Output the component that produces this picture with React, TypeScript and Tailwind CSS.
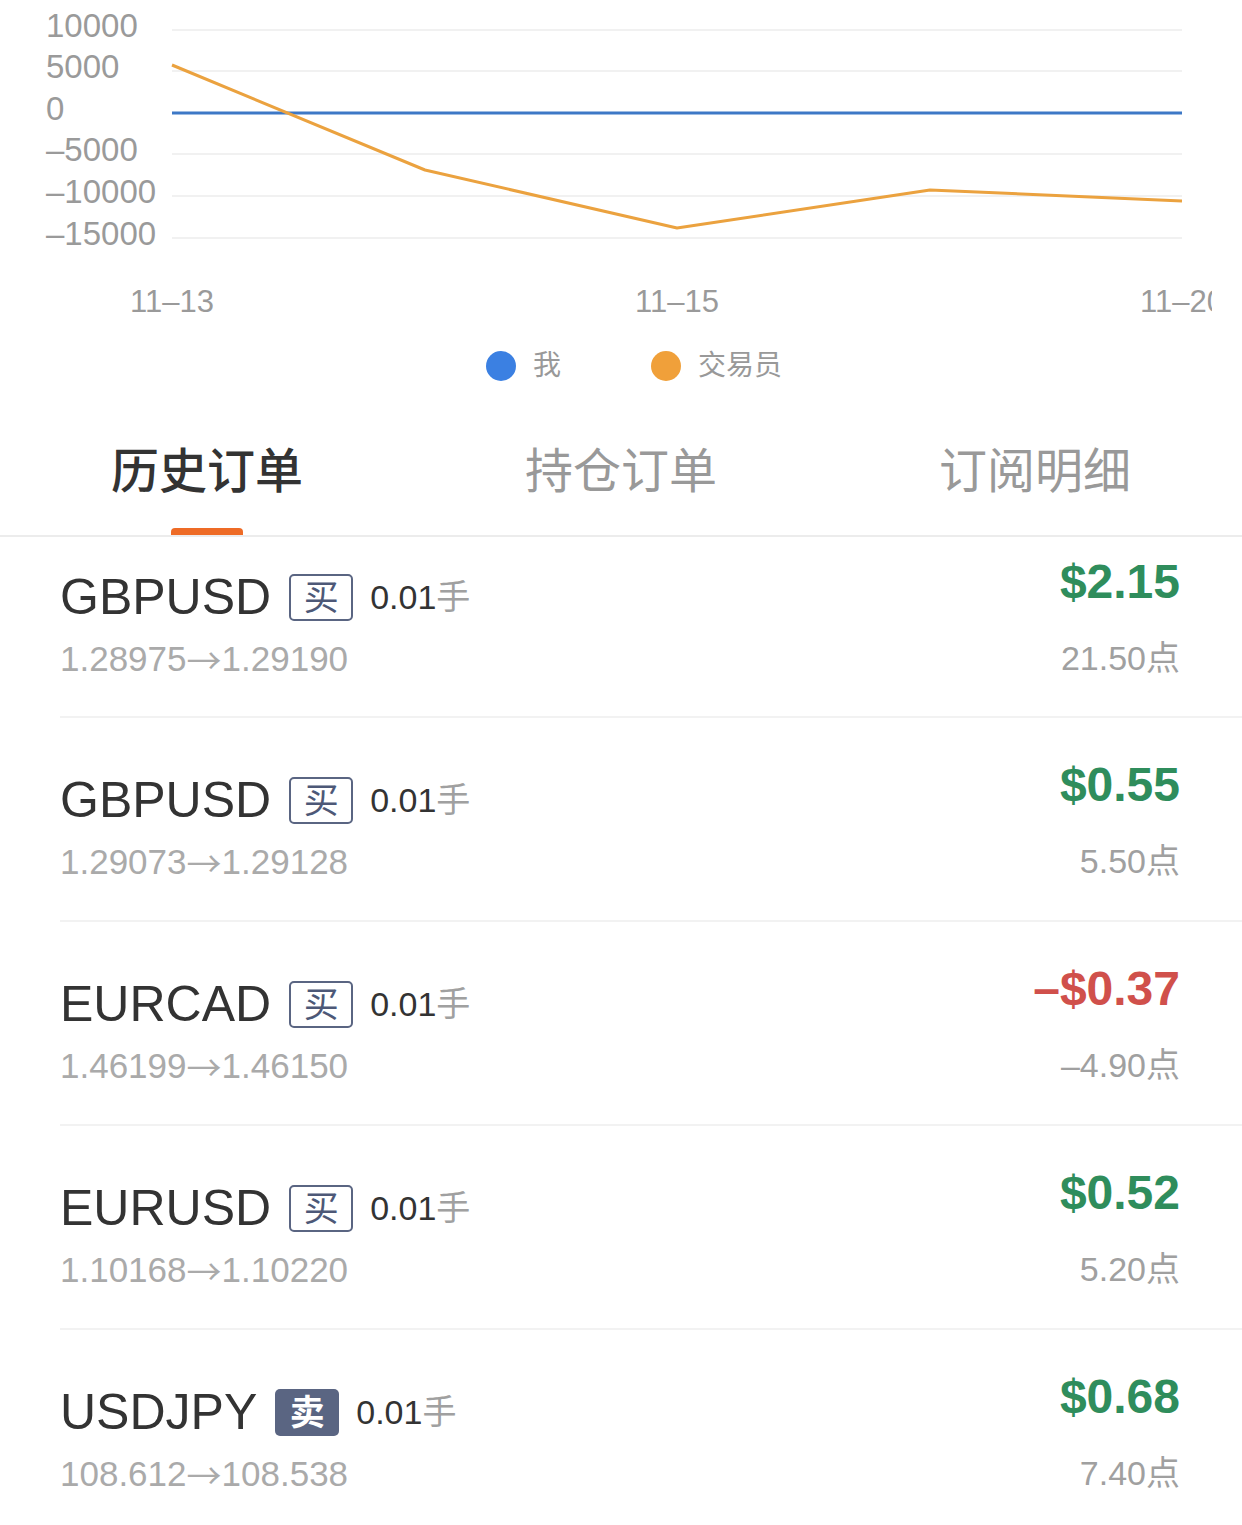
import React from "react";

type Order = {
  symbol: string;
  side: "buy" | "sell";
  lots: string;
  open: string;
  close: string;
  profit: string;
  points: string;
};

const orders: Order[] = [
  { symbol: "GBPUSD", side: "buy", lots: "0.01", open: "1.28975", close: "1.29190", profit: "$2.15", points: "21.50" },
  { symbol: "GBPUSD", side: "buy", lots: "0.01", open: "1.29073", close: "1.29128", profit: "$0.55", points: "5.50" },
  { symbol: "EURCAD", side: "buy", lots: "0.01", open: "1.46199", close: "1.46150", profit: "–$0.37", points: "–4.90" },
  { symbol: "EURUSD", side: "buy", lots: "0.01", open: "1.10168", close: "1.10220", profit: "$0.52", points: "5.20" },
  { symbol: "USDJPY", side: "sell", lots: "0.01", open: "108.612", close: "108.538", profit: "$0.68", points: "7.40" },
];

const yTicks = [
  { label: "10000", y: 30 },
  { label: "5000", y: 71 },
  { label: "0", y: 113 },
  { label: "–5000", y: 154 },
  { label: "–10000", y: 196 },
  { label: "–15000", y: 238 },
];

const Chart = () => {
  return (
    <svg width={1212} height={340} className="block overflow-hidden">
      {yTicks.map((t) => (
        <g key={t.label}>
          {t.label !== "0" && (
            <line x1={172} x2={1182} y1={t.y} y2={t.y} stroke="#ececec" strokeWidth={1.5} />
          )}
          <text x={46} y={t.y - 2} dominantBaseline="middle" fontSize={33} fill="#9a9a9a">
            {t.label}
          </text>
        </g>
      ))}
      <line x1={172} x2={1182} y1={113} y2={113} stroke="#3d78c6" strokeWidth={3} />
      <polyline
        points="172,65 425,170 677,228 930,190 1182,201"
        fill="none"
        stroke="#eba23f"
        strokeWidth={3}
        strokeLinejoin="round"
      />
      {[
        { label: "11–13", x: 172 },
        { label: "11–15", x: 677 },
        { label: "11–20", x: 1182 },
      ].map((l) => (
        <text key={l.label} x={l.x} y={304} textAnchor="middle" dominantBaseline="middle" fontSize={31} fill="#9a9a9a">
          {l.label}
        </text>
      ))}
    </svg>
  );
};

const Legend = () => (
  <div className="flex h-[52px] items-center justify-center gap-[90px] pl-[26px]">
    <div className="flex items-center gap-[17px]">
      <span className="h-[30px] w-[30px] rounded-full bg-[#3b80e2]" />
      <span className="text-[28px] leading-none text-[#999]">我</span>
    </div>
    <div className="flex items-center gap-[17px]">
      <span className="h-[30px] w-[30px] rounded-full bg-[#f0a03a]" />
      <span className="text-[28px] leading-none text-[#999]">交易员</span>
    </div>
  </div>
);

const Tabs = () => {
  const tabs = ["历史订单", "持仓订单", "订阅明细"];
  return (
    <div className="grid grid-cols-3 border-b-2 border-[#ececec]">
      {tabs.map((t, i) => (
        <div key={t} className="flex flex-col items-center pt-[56px]">
          <span
            className={
              i === 0
                ? "text-[48px] leading-none font-medium text-[#333]"
                : "text-[48px] leading-none text-[#999]"
            }
          >
            {t}
          </span>
          <span
            className={
              i === 0
                ? "mt-[32px] h-[7px] w-[72px] rounded-t-[4px] bg-[#ee6b26]"
                : "mt-[32px] h-[7px] w-[72px]"
            }
          />
        </div>
      ))}
    </div>
  );
};

const OrderRow = ({ order, first }: { order: Order; first: boolean }) => {
  const negative = order.profit.startsWith("–");
  return (
    <div
      className={
        first
          ? "ml-[60px] flex h-[181px] justify-between border-b-2 border-[#f2f2f2] pr-[62px]"
          : "ml-[60px] flex h-[204px] justify-between border-b-2 border-[#f2f2f2] pr-[62px]"
      }
    >
      <div className={first ? "flex flex-col pt-[32px]" : "flex flex-col pt-[54px]"}>
        <div className="flex h-[56px] items-center">
          <span className="text-[50px] leading-none text-[#333]">{order.symbol}</span>
          {order.side === "buy" ? (
            <span className="ml-[18px] flex h-[47px] w-[64px] items-center justify-center rounded-[5px] border-[2.5px] border-[#5a6582] text-[35px] leading-none text-[#4d5877]">
              买
            </span>
          ) : (
            <span className="ml-[18px] flex h-[47px] w-[64px] items-center justify-center rounded-[5px] bg-[#5a6582] text-[35px] leading-none font-bold text-white">
              卖
            </span>
          )}
          <span className="ml-[17px] text-[34px] leading-none text-[#333]">
            {order.lots}
            <span className="text-[#a0a0a0]">手</span>
          </span>
        </div>
        <div className="mt-[13px] flex h-[40px] items-center text-[35px] leading-none text-[#aaa]">
          {order.open}
          <span className="font-['Noto_Sans_CJK_SC',sans-serif]">→</span>
          {order.close}
        </div>
      </div>
      <div className={first ? "flex flex-col items-end pt-[17px]" : "flex flex-col items-end pt-[39px]"}>
        <div
          className={
            negative
              ? "flex h-[56px] items-center text-[48px] leading-none font-semibold text-[#d0504b]"
              : "flex h-[56px] items-center text-[48px] leading-none font-semibold text-[#2f8d5c]"
          }
        >
          {order.profit}
        </div>
        <div className="mt-[28px] flex h-[40px] items-center text-[34px] leading-none text-[#a0a0a0]">
          {order.points}点
        </div>
      </div>
    </div>
  );
};

const App = () => {
  return (
    <div className="w-[1242px] h-[1525px] overflow-hidden bg-white font-['Liberation_Sans','Noto_Sans_CJK_SC',sans-serif]">
      <Chart />
      <Legend />
      <Tabs />
      <div className="flex flex-col">
        {orders.map((o, i) => (
          <OrderRow key={i} order={o} first={i === 0} />
        ))}
      </div>
    </div>
  );
};

export default App;
